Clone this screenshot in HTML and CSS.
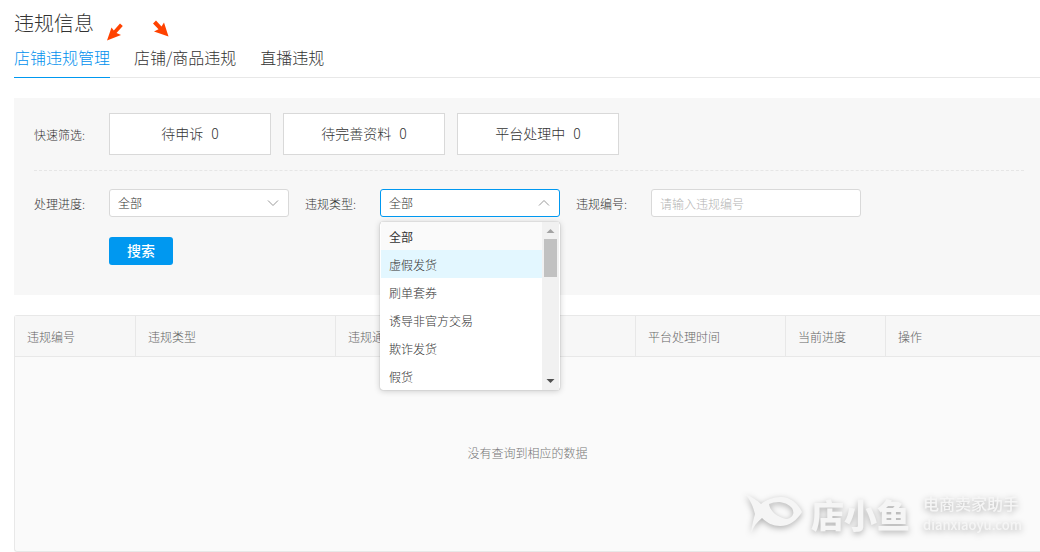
FILE: index.html
```html
<!DOCTYPE html>
<html lang="zh-CN">
<head>
<meta charset="utf-8">
<title>违规信息</title>
<link rel="stylesheet" href="styles.css">
</head>
<body>
<main class="page">
  <header class="page-head">
    <h1 class="title">违规信息</h1>
    <svg class="pointer pointer-left" viewBox="0 0 16 18" aria-hidden="true"><path d="M0 17.500 4.500 4.500 6.800 7.500 13 0.500 15.800 3 9.500 10 14 12Z"/></svg>
    <svg class="pointer pointer-right" viewBox="0 0 16 18" aria-hidden="true"><path d="M15.500 16.500 1 11.500 5.500 9.300 0 3.500 3 0.500 8.500 6.500 11 2.500Z"/></svg>
  </header>
  <nav class="tabs">
    <a class="tab tab-active" href="#shop">店铺违规管理</a>
    <a class="tab" href="#goods">店铺/商品违规</a>
    <a class="tab" href="#live">直播违规</a>
  </nav>

  <form class="filters">
    <div class="quick">
      <span class="label">快速筛选:</span>
      <div class="quick-list">
        <button type="button" class="quick-btn"><span>待申诉</span><span>0</span></button>
        <button type="button" class="quick-btn"><span>待完善资料</span><span>0</span></button>
        <button type="button" class="quick-btn"><span>平台处理中</span><span>0</span></button>
      </div>
    </div>
    <div class="fields">
      <div class="field">
        <label class="label" for="progress">处理进度:</label>
        <div class="select-wrap">
          <select class="control" id="progress"><option>全部</option></select>
          <svg class="chevron" viewBox="0 0 12 8" aria-hidden="true"><path d="M1 1.500 6 6.500 11 1.500"/></svg>
        </div>
      </div>
      <div class="field">
        <label class="label" for="type">违规类型:</label>
        <div class="select-wrap">
          <select class="control control-open" id="type"><option>全部</option></select>
          <svg class="chevron" viewBox="0 0 12 8" aria-hidden="true"><path d="M1 6.500 6 1.500 11 6.500"/></svg>
          <div class="menu">
            <ul class="options">
              <li class="option option-selected">全部</li>
              <li class="option option-hover">虚假发货</li>
              <li class="option">刷单套券</li>
              <li class="option">诱导非官方交易</li>
              <li class="option">欺诈发货</li>
              <li class="option">假货</li>
            </ul>
            <div class="scrollbar">
              <svg class="arrow" viewBox="0 0 17 17" aria-hidden="true"><path fill="#a3a3a3" d="M4.500 11 8.500 7 12.500 11Z"/></svg>
              <div class="thumb"></div>
              <svg class="arrow arrow-down" viewBox="0 0 17 17" aria-hidden="true"><path fill="#505050" d="M4.500 6 8.500 10 12.500 6Z"/></svg>
            </div>
          </div>
        </div>
      </div>
      <div class="field">
        <label class="label" for="number">违规编号:</label>
        <input class="control control-wide" id="number" type="text" placeholder="请输入违规编号">
      </div>
    </div>
    <div class="actions"><button type="submit" class="search">搜索</button></div>
  </form>

  <table class="results">
    <colgroup>
      <col class="col-number"><col class="col-type"><col class="col-time"><col class="col-time"><col class="col-time"><col class="col-state"><col>
    </colgroup>
    <thead>
      <tr><th>违规编号</th><th>违规类型</th><th>违规通</th><th></th><th>平台处理时间</th><th>当前进度</th><th>操作</th></tr>
    </thead>
    <tbody>
      <tr><td class="empty" colspan="7">没有查询到相应的数据</td></tr>
    </tbody>
  </table>

  <div class="brand">
    <svg class="brand-fish" viewBox="0 0 60 42" aria-hidden="true">
      <path fill-rule="evenodd" d="M1 1C8 4 13 7 17 11C22 7 29 4 37 4C47 4 54 11 58 19C53 27 46 33 36 33C29 33 23 30 18 25C13 29 9 34 7 40C8 33 9 28 11 21C9 13 6 6 1 1ZM25 11C26 18 33 24 42 26C49 25 51 20 48 15C43 9 33 7 25 11Z"/>
    </svg>
    <span class="brand-name">店小鱼</span>
    <span class="brand-side"><span>电商卖家助手</span><span class="brand-url">dianxiaoyu.com</span></span>
  </div>
</main>
</body>
</html>
```
FILE: styles.css
```css
* { box-sizing: border-box; }

body {
  margin: 0;
  background: #fff;
  color: #333;
  font: 300 12px/20px "Noto Sans CJK SC", sans-serif;
}

button, input, select { font: inherit; color: inherit; }

.page {
  position: relative;
  padding: 8px 0 0 14px;
  overflow: hidden;
}

.page-head { position: relative; }

.title {
  margin: 0;
  font-size: 20px;
  font-weight: 300;
  line-height: 30px;
}

.pointer {
  position: absolute;
  top: 15px;
  width: 16px;
  height: 18px;
  fill: #ff4200;
}
.pointer-left { left: 93px; }
.pointer-right { left: 139px; top: 12px; }

.tabs {
  display: flex;
  gap: 24px;
  border-bottom: 1px solid #e8e8e8;
}

.tab {
  margin-bottom: -1px;
  padding: 7px 0 8px;
  border-bottom: 1px solid transparent;
  color: #333;
  font-size: 16px;
  line-height: 24px;
  text-decoration: none;
}
.tab-active { border-color: #0098f0; color: #0090ee; }

.filters {
  margin-top: 20px;
  padding: 15px 16px 30px 20px;
  background: #f7f7f7;
}

.quick {
  display: flex;
  align-items: center;
  padding-bottom: 15px;
  border-bottom: 1px dashed #e6e6e6;
}

.label { width: 75px; flex: none; padding-top: 2px; }

.quick-list { display: flex; gap: 12px; }

.quick-btn {
  display: flex;
  align-items: center;
  justify-content: center;
  gap: 8px;
  width: 162px;
  height: 42px;
  padding: 0 6px 2px;
  border: 1px solid #d9d9d9;
  background: #fff;
  font-size: 14px;
}

.fields { display: flex; gap: 16px; padding-top: 18px; }

.field { display: flex; align-items: center; }

.select-wrap { position: relative; }

.control {
  display: block;
  width: 180px;
  height: 28px;
  padding: 0 8px;
  border: 1px solid #d9d9d9;
  border-radius: 3px;
  background: #fff;
  appearance: none;
  outline: none;
}
.control-open { border-color: #0098f0; }
.control-wide { width: 210px; }
.control::placeholder { color: #b3b3b3; opacity: 1; }

.chevron {
  position: absolute;
  top: 10px;
  right: 10px;
  width: 12px;
  height: 8px;
  fill: none;
  stroke: #999;
  pointer-events: none;
}

.menu {
  position: absolute;
  z-index: 2;
  top: 33px;
  left: 0;
  display: flex;
  width: 100%;
  padding: 0 1px;
  border-radius: 3px;
  background: #fff;
  box-shadow: 0 0 1px rgba(0, 0, 0, .4), 0 1px 6px rgba(0, 0, 0, .2);
}

.options { flex: 1; margin: 0; padding: 0; list-style: none; }
.option { padding: 5px 8px 3px; }
.option-selected { background: #fafafa; font-weight: 400; }
.option-hover { background: #e3f7ff; }

.scrollbar {
  display: flex;
  flex-direction: column;
  align-items: center;
  width: 17px;
  background: #f1f1f1;
}
.arrow { width: 17px; height: 17px; }
.arrow-down { margin-top: auto; }
.thumb { width: 13px; height: 38px; background: #c1c1c1; }

.actions { padding: 20px 0 0 75px; }

.search {
  width: 64px;
  height: 28px;
  padding: 0 0 2px;
  border: 0;
  border-radius: 3px;
  background: #0098f0;
  color: #fff;
  font-size: 14px;
  font-weight: 500;
}

.results {
  width: 100%;
  margin-top: 20px;
  border: solid #e8e8e8;
  border-width: 1px 0 1px 1px;
  border-radius: 3px 0 0 3px;
  border-spacing: 0;
  table-layout: fixed;
  background: #fafafa;
}
.results th {
  padding: 11px 12px 9px;
  border-right: 1px solid #e8e8e8;
  border-bottom: 1px solid #e8e8e8;
  background: #f7f7f7;
  color: #666;
  font-weight: 300;
  text-align: left;
}
.results th:last-child { border-right: 0; }
.col-number { width: 121px; }
.col-type { width: 200px; }
.col-time { width: 150px; }
.col-state { width: 100px; }

.empty { padding: 86px 0 88px; color: #777; text-align: center; }

.brand {
  position: absolute;
  right: 18px;
  bottom: 17px;
  display: flex;
  align-items: center;
  color: #f5f5f5;
  filter: drop-shadow(0 2px 3px rgba(0, 0, 0, .3));
}
.brand-fish { width: 60px; height: 42px; margin-right: 7px; fill: #f5f5f5; }
.brand-name { font-size: 33px; font-weight: 900; line-height: 40px; }
.brand-side {
  display: flex;
  flex-direction: column;
  margin-left: 13px;
  font-size: 16px;
  font-weight: 500;
  line-height: 21px;
}
.brand-url { font-size: 13px; }
```
